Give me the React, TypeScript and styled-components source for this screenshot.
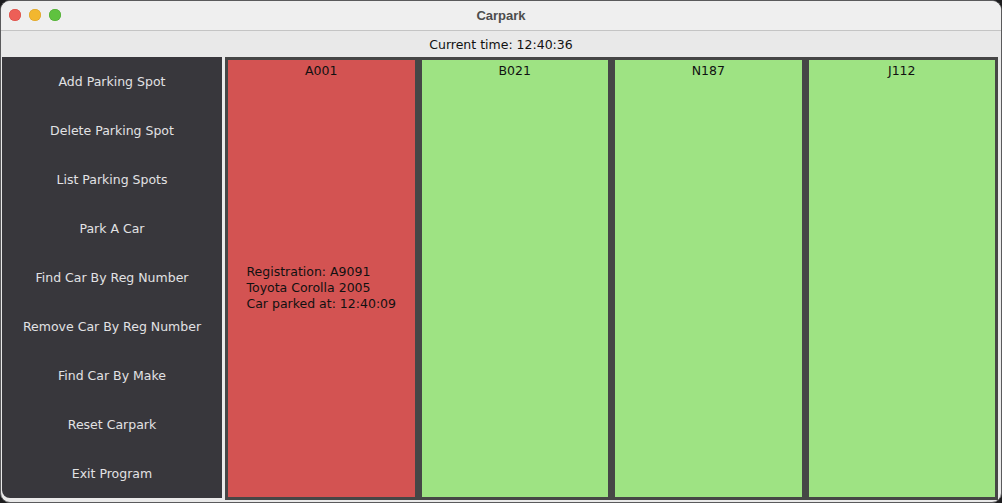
import React from "react";
import styled, { createGlobalStyle } from "styled-components";

const Global = createGlobalStyle`
  html, body { margin: 0; padding: 0; background: #1d1d1f; }
  body { width: 1002px; height: 503px; overflow: hidden; font-family: "DejaVu Sans", "Liberation Sans", sans-serif; }
`;

const Window = styled.div`
  width: 1002px;
  height: 503px;
  box-sizing: border-box;
  display: flex;
  flex-direction: column;
  background: #e9e9e9;
  border: 1px solid #5a5a5c;
  border-radius: 10px;
  overflow: hidden;
`;

const TitleBar = styled.div`
  position: relative;
  height: 29px;
  flex: none;
  display: flex;
  align-items: center;
  justify-content: center;
  background: #efefef;
  border-bottom: 1px solid #c4c4c4;
`;

const Lights = styled.div`
  position: absolute;
  left: 8px;
  top: 8px;
  display: flex;
  gap: 8px;
`;

const Light = styled.span<{ $c: string; $b: string }>`
  width: 12px;
  height: 12px;
  border-radius: 50%;
  background: ${(p) => p.$c};
  box-shadow: inset 0 0 0 0.5px ${(p) => p.$b};
`;

const Title = styled.div`
  font-family: "Liberation Sans", Arial, sans-serif;
  font-size: 13px;
  font-weight: 700;
  color: #4c4c4c;
`;

const TimeBar = styled.div`
  height: 26px;
  flex: none;
  display: flex;
  align-items: center;
  justify-content: center;
  font-size: 12.5px;
  color: #111;
  padding-top: 1px;
  box-sizing: border-box;
`;

const Main = styled.div`
  flex: 1;
  display: flex;
  gap: 3px;
  padding: 0 3px 2px 1px;
  min-height: 0;
`;

const Sidebar = styled.div`
  width: 220px;
  flex: none;
  display: grid;
  grid-template-rows: repeat(9, 1fr);
  background: #38373c;
  border-bottom-left-radius: 8px;
  margin-bottom: 2px;
`;

const NavButton = styled.div`
  display: flex;
  align-items: center;
  justify-content: center;
  color: #e2e2e4;
  font-size: 12.5px;
`;

const Cards = styled.div`
  flex: 1;
  display: grid;
  grid-template-columns: repeat(4, 1fr);
  gap: 1px;
  background: #464646;
`;

const Card = styled.div<{ $occupied: boolean }>`
  display: flex;
  flex-direction: column;
  border: 3px solid #464646;
  background: ${(p) => (p.$occupied ? "#d35352" : "#9ee383")};
  color: #111;
`;

const CardTitle = styled.div`
  height: 20px;
  display: flex;
  align-items: center;
  justify-content: center;
  font-size: 12.5px;
`;

const CardBody = styled.div`
  flex: 1;
  display: flex;
  align-items: center;
  justify-content: center;
  padding-bottom: 2px;
`;

const Info = styled.div`
  font-size: 12.5px;
  line-height: 16px;
  text-align: left;
`;

const buttons = [
  "Add Parking Spot",
  "Delete Parking Spot",
  "List Parking Spots",
  "Park A Car",
  "Find Car By Reg Number",
  "Remove Car By Reg Number",
  "Find Car By Make",
  "Reset Carpark",
  "Exit Program",
];

const spots: { id: string; car?: string[] }[] = [
  { id: "A001", car: ["Registration: A9091", "Toyota Corolla 2005", "Car parked at: 12:40:09"] },
  { id: "B021" },
  { id: "N187" },
  { id: "J112" },
];

export default function App() {
  return (
    <>
      <Global />
      <Window>
        <TitleBar>
          <Lights>
            <Light $c="#ed5f57" $b="#d5483f" />
            <Light $c="#f2b72f" $b="#d89e22" />
            <Light $c="#5fc23f" $b="#4aa52c" />
          </Lights>
          <Title>Carpark</Title>
        </TitleBar>
        <TimeBar>Current time: 12:40:36</TimeBar>
        <Main>
          <Sidebar>
            {buttons.map((b) => (
              <NavButton key={b}>{b}</NavButton>
            ))}
          </Sidebar>
          <Cards>
            {spots.map((s) => (
              <Card key={s.id} $occupied={!!s.car}>
                <CardTitle>{s.id}</CardTitle>
                <CardBody>
                  {s.car && (
                    <Info>
                      {s.car.map((l) => (
                        <div key={l}>{l}</div>
                      ))}
                    </Info>
                  )}
                </CardBody>
              </Card>
            ))}
          </Cards>
        </Main>
      </Window>
    </>
  );
}
